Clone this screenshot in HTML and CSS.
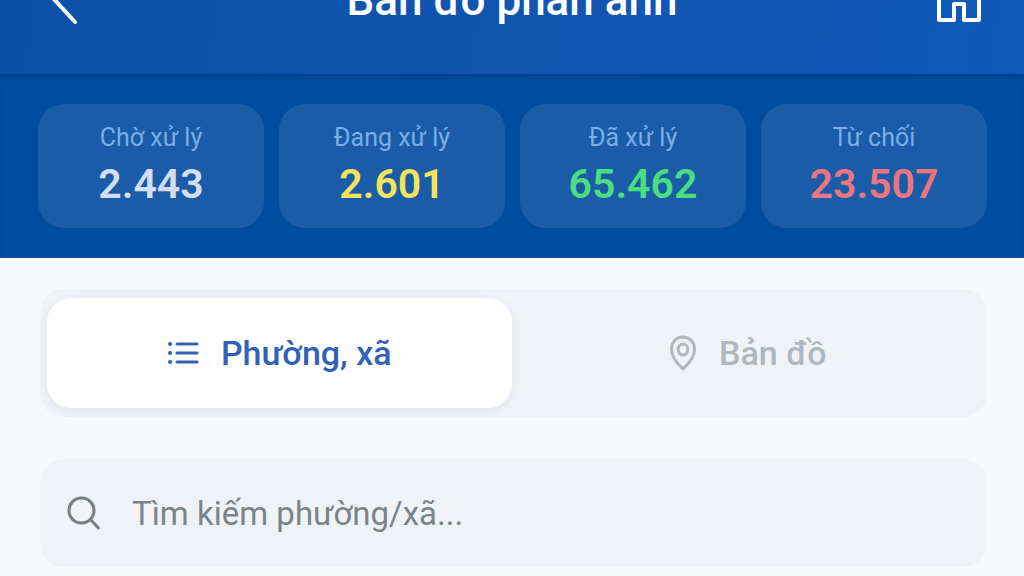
FILE: index.html
```html
<!DOCTYPE html>
<html lang="vi">
<head>
    <meta charset="UTF-8">
    <meta name="viewport" content="width=device-width, initial-scale=1.0">
    <title>Bản đồ phản ánh</title>
    <link rel="stylesheet" href="styles.css">
</head>
<body>

    <!-- Top bar -->
    <header class="top-bar">
        <button class="icon-btn" type="button" aria-label="Quay lại">
            <svg class="back-icon" viewBox="0 0 48 60">
                <path d="M35 2L12 27L35 52"/>
            </svg>
        </button>
        <h1>Bản đồ phản ánh</h1>
        <button class="icon-btn" type="button" aria-label="Trang chủ">
            <svg class="home-icon" viewBox="0 0 48 60">
                <path d="M3 19L23 3L43 19V50H28V34H18V50H3Z"/>
            </svg>
        </button>
    </header>

    <!-- Counters -->
    <section class="stats">
        <div class="stat">
            <span class="stat-label">Chờ xử lý</span>
            <span class="stat-value waiting">2.443</span>
        </div>
        <div class="stat">
            <span class="stat-label">Đang xử lý</span>
            <span class="stat-value processing">2.601</span>
        </div>
        <div class="stat">
            <span class="stat-label">Đã xử lý</span>
            <span class="stat-value done">65.462</span>
        </div>
        <div class="stat">
            <span class="stat-label">Từ chối</span>
            <span class="stat-value rejected">23.507</span>
        </div>
    </section>

    <main class="content">
        <!-- List / map switch -->
        <div class="tabs">
            <button class="tab active" type="button">
                <svg class="list-icon" viewBox="0 0 32 32">
                    <path d="M10 7H30M10 16H30M10 25H30"/>
                    <path class="dots" d="M3 7H3.1M3 16H3.1M3 25H3.1"/>
                </svg>
                Phường, xã
            </button>
            <button class="tab" type="button">
                <svg class="pin-icon" viewBox="0 0 28 36">
                    <path d="M14 34C11 31 2.500 24 2.500 14.500C2.500 7 7.500 2 14 2S25.500 7 25.500 14.500C25.500 24 17 31 14 34Z"/>
                    <ellipse cx="14" cy="14.500" rx="4.800" ry="5.500"/>
                </svg>
                Bản đồ
            </button>
        </div>

        <!-- Search -->
        <label class="search">
            <svg class="search-icon" viewBox="0 0 36 36">
                <circle cx="15.500" cy="15.500" r="12.500"/>
                <path d="M24.500 24.500L32.500 33"/>
            </svg>
            <input type="text" placeholder="Tìm kiếm phường/xã..." aria-label="Tìm kiếm phường/xã">
        </label>
    </main>

</body>
</html>
```
FILE: styles.css
```css
* {
    margin: 0;
    padding: 0;
    box-sizing: border-box;
    font-family: Roboto, "Liberation Sans", sans-serif;
}

body {
    background-color: #f8f9fd;
    overflow: hidden;
}

button {
    border: none;
    background: none;
    cursor: pointer;
}

svg {
    fill: none;
    stroke: currentColor;
    stroke-linecap: round;
    stroke-linejoin: round;
    flex-shrink: 0;
}

/* Top bar, scrolled partly out of view */
.top-bar {
    display: flex;
    justify-content: space-between;
    align-items: center;
    height: 148px;
    margin-top: -74px;
    padding: 0 40px;
    background: linear-gradient(100deg, #0850a8, #1155b0 50%, #0d58b8);
    color: #ffffff;
}

h1 {
    font-size: 44px;
    font-weight: 500;
    line-height: 48px;
}

.icon-btn {
    color: #ffffff;
}

.icon-btn svg {
    display: block;
    width: 48px;
    height: 60px;
    stroke-width: 4;
}

/* Counters */
.stats {
    display: grid;
    grid-template-columns: repeat(4, 1fr);
    gap: 15px;
    padding: 30px 37px 30px 38px;
    background-color: #004c9e;
    box-shadow: inset 0 4px 4px -1px #00408c;
}

.stat {
    display: flex;
    flex-direction: column;
    align-items: center;
    gap: 8px;
    padding: 18px 0 22px;
    border-radius: 26px;
    background-color: #1b5ca8;
}

.stat-label {
    color: #79aee8;
    font-size: 25px;
    line-height: 32px;
}

.stat-value {
    font-size: 41px;
    font-weight: 600;
    line-height: 44px;
}

.waiting {
    color: #d3def2;
}

.processing {
    color: #f2e45c;
}

.done {
    color: #4ade80;
}

.rejected {
    color: #ec7680;
}

/* List / map switch */
.content {
    display: flex;
    flex-direction: column;
    gap: 42px;
    padding: 31px 37px 10px 40px;
}

.tabs {
    display: flex;
    gap: 4px;
    padding: 9px 7px;
    border-radius: 24px;
    background-color: #eff3f8;
}

.tab {
    display: flex;
    flex: 1;
    justify-content: center;
    align-items: center;
    gap: 22px;
    height: 110px;
    border-radius: 24px;
    color: #b0b7c0;
    font-size: 34px;
    font-weight: 500;
}

.tab.active {
    background-color: #ffffff;
    color: #3461b8;
    box-shadow: 0 2px 10px rgba(40, 70, 90, 0.08);
}

.list-icon {
    width: 32px;
    height: 32px;
    stroke-width: 3;
}

.list-icon .dots {
    stroke-width: 4;
}

.pin-icon {
    width: 28px;
    height: 36px;
    stroke-width: 3;
}

/* Search */
.search {
    display: flex;
    align-items: center;
    gap: 30px;
    height: 108px;
    padding: 0 26px;
    border-radius: 24px;
    background-color: #eff3f8;
    color: #767e86;
}

.search-icon {
    width: 36px;
    height: 36px;
    stroke-width: 3;
}

.search input {
    flex: 1;
    min-width: 0;
    border: none;
    outline: none;
    background: none;
    color: #767e86;
    font-size: 33px;
}

.search input::placeholder {
    color: #7b838b;
    opacity: 1;
}
```
